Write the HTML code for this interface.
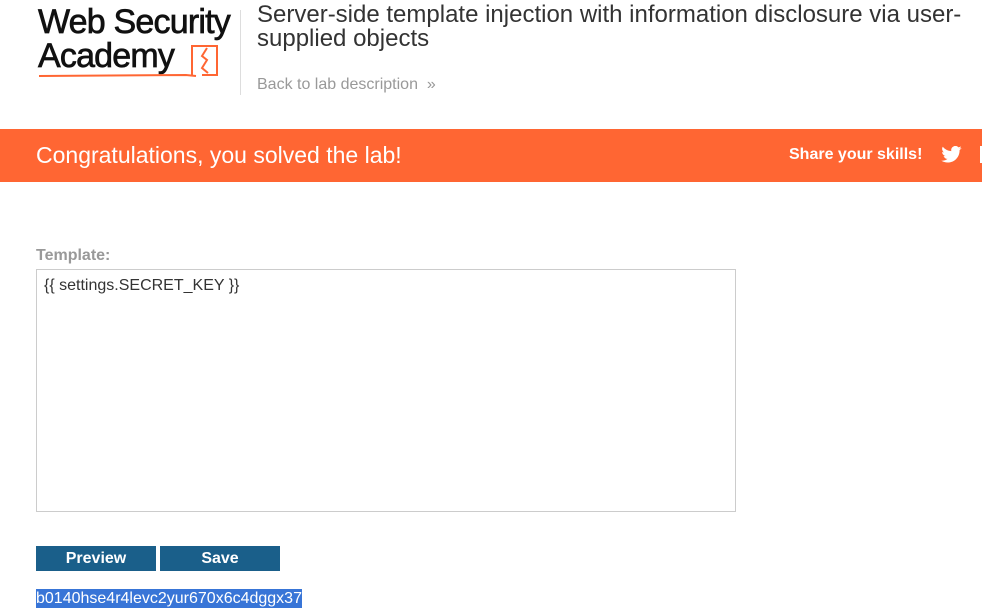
<!DOCTYPE html>
<html><head><style>
body{margin:0;width:982px;height:612px;overflow:hidden;background:#fff;font-family:"Liberation Sans",sans-serif;position:relative}
.a{position:absolute}
</style></head><body>
<div class="a" style="left:38px;top:5px;font-size:34px;letter-spacing:-0.8px;line-height:34px;color:#111;-webkit-text-stroke:0.7px #111">Web Security<br>Academy</div>
<svg class="a" style="left:36px;top:40px" width="185" height="40"><path d="M3 36 L150 35 L160 36" stroke="#ff6633" stroke-width="2" fill="none"/><path d="M156 36 V6 H181 V35 H166" stroke="#ff6633" stroke-width="2" fill="none"/><path d="M171 8 L166 16 L171 20 L166 28 L172 33" stroke="#ff6633" stroke-width="2" fill="none"/></svg>
<div class="a" style="left:240px;top:10px;width:1px;height:85px;background:#ddd"></div>
<div class="a" style="left:257px;top:3px;width:720px;font-size:24px;line-height:24px;color:#333">Server-side template injection with information disclosure via user-supplied objects</div>
<div class="a" style="left:257px;top:76px;font-size:16px;color:#999">Back to lab description &nbsp;»</div>
<div class="a" style="left:0;top:129px;width:982px;height:53px;background:#ff6633"></div>
<div class="a" style="left:36px;top:142px;font-size:23px;color:#fff">Congratulations, you solved the lab!</div>
<div class="a" style="left:789px;top:146px;font-size:16px;font-weight:bold;color:#fff">Share your skills!</div>
<svg class="a" style="left:941px;top:146px" width="21" height="17" viewBox="0 0 24 20"><path fill="#fff" d="M24 2.4a10 10 0 0 1-2.8.8A5 5 0 0 0 23.3.4a10 10 0 0 1-3.1 1.2A4.9 4.9 0 0 0 11.8 6 14 14 0 0 1 1.7.9a4.9 4.9 0 0 0 1.5 6.6A5 5 0 0 1 1 6.9a4.9 4.9 0 0 0 3.9 4.8 5 5 0 0 1-2.2.1 4.9 4.9 0 0 0 4.6 3.4A9.9 9.9 0 0 1 0 17.2 14 14 0 0 0 7.5 19.4c9.1 0 14-7.5 14-14v-.6A10 10 0 0 0 24 2.4z"/></svg>
<div class="a" style="left:980px;top:146px;width:2px;height:17px;background:#fff"></div>
<div class="a" style="left:36px;top:247px;font-size:16px;font-weight:bold;color:#999">Template:</div>
<div class="a" style="left:36px;top:269px;width:698px;height:241px;border:1px solid #ccc"></div>
<div class="a" style="left:44px;top:277px;font-size:16px;color:#333">{{ settings.SECRET_KEY }}</div>
<div class="a" style="left:36px;top:546px;width:120px;height:25px;background:#1a5f8a;color:#fff;font-weight:bold;font-size:16px;text-align:center;line-height:25px">Preview</div>
<div class="a" style="left:160px;top:546px;width:120px;height:25px;background:#1a5f8a;color:#fff;font-weight:bold;font-size:16px;text-align:center;line-height:25px">Save</div>
<div class="a" style="left:36px;top:589px;background:#3875d7;color:#fff;font-size:16px;line-height:19px">b0140hse4r4levc2yur670x6c4dggx37</div>
</body></html>
